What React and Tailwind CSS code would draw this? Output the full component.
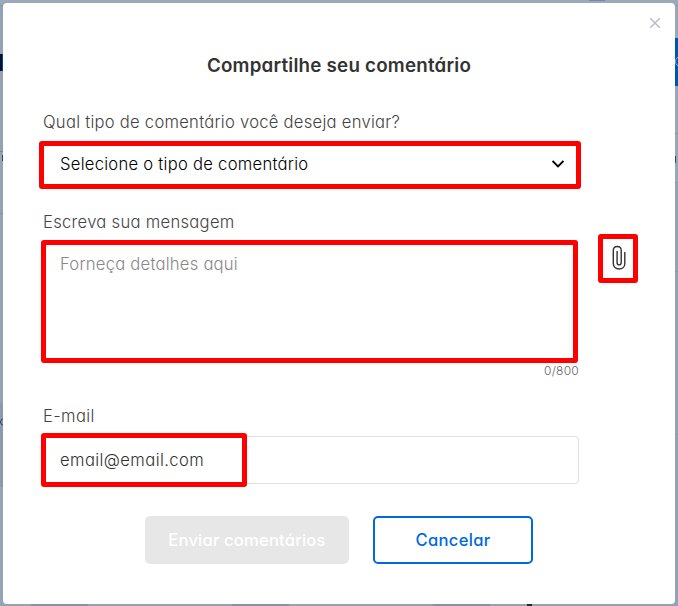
import { useState } from "react";

// slices of the dimmed page that stay visible around the dialog
const leftSlices = [
  "h-[2px] bg-[#9aabbc]",
  "h-[1px] bg-[#8797a9]",
  "h-[48px] bg-[#93a3b5]",
  "h-[17px] bg-[#00112a] border-r border-[#00468c]",
  "h-[80px] bg-[#93a3b5]",
  "h-[1px] bg-[#5e8fc0]",
  "h-[3px] bg-[#93a3b5]",
  "ml-[2px] h-[6px] bg-[#3b3f5c]",
  "h-[52px] bg-[#93a3b5]",
  "h-[1px] bg-[#8797a9]",
  "h-[189px] bg-[#93a3b5]",
  "h-[15px] bg-[#8b9bab]",
  "h-[8px] w-[8px] rounded-full border border-[#1d3c70] bg-[#8b9bab]",
  "h-[61px] bg-[#8b9bab]",
  "h-[120px] bg-[#95a5b7]",
];

const rightSlices = [
  "h-[2px] bg-[#98a8b9]",
  "h-[1px] bg-[#8797a9]",
  "h-[32px] bg-[#98a8b9]",
  "h-[18px] bg-[#0053b0]",
  "h-[11px] bg-[#0053b0]",
  "h-[19px] bg-[#0053b0]",
  "h-[47px] bg-[#98a8b9]",
  "h-[1px] bg-[#8797a9]",
  "h-[22px] bg-[#98a8b5]",
  "h-[7px] w-[1px] bg-[#0d4f9e]",
  "h-[19px] bg-[#98a8b5]",
  "h-[1px] bg-[#8797a9]",
  "h-[88px] bg-[#93a3b5]",
  "h-[1px] bg-[#8797a9]",
  "h-[162px] bg-[#93a3b5]",
  "h-[1px] bg-[#8797a9]",
  "h-[169px] bg-[#93a3b5]",
];

function Slices({ items, glyph }) {
  return (
    <div className="flex flex-col overflow-hidden">
      {items.map((item, i) => (
        <div key={i} className={`shrink-0 ${item}`}>
          {i === glyph && <div className="h-[11px] w-[11px] rounded-full border border-[#93b0d2]" />}
        </div>
      ))}
    </div>
  );
}

function PaperclipIcon() {
  return (
    <svg width="14" height="26" viewBox="0 0 14 26" fill="none" stroke="#333" strokeWidth="1.4" strokeLinecap="round">
      <path d="M12.8 7.5V18.5C12.8 21.8 10.3 24 7.1 24S1.3 21.8 1.3 18.5V5.5C1.3 3 3 1.5 5.2 1.5S9.2 3 9.2 5.5V17.8C9.2 19.1 8.3 19.9 7.2 19.9S5.1 19.1 5.1 17.8V6.5" />
    </svg>
  );
}

function App() {
  const [message, setMessage] = useState("");

  return (
    <div className="grid h-[606px] w-[678px] grid-cols-[3px_672px_3px] grid-rows-[3px_601px_2px] overflow-hidden bg-[#98a8b9] font-['Inter',sans-serif] [font-feature-settings:'cv11']">

      <div className="col-span-3 flex bg-[#9aaaba]">
        <div className="ml-[589px] h-[1px] w-4 bg-[#78879b]" />
      </div>

      <Slices items={leftSlices} />

      <div className="flex flex-col rounded-[4px] bg-white">

        <div className="flex h-[42px] justify-end pt-[14px] pr-[14px]">
          <button className="h-3 w-3">
            <svg width="12" height="12" viewBox="0 0 12 12" stroke="#b9bdc9" strokeWidth="1.6">
              <path d="M1.3 1.3L10.7 10.7M10.7 1.3L1.3 10.7" />
            </svg>
          </button>
        </div>

        <h1 className="h-10 text-center text-[18.75px] leading-[42px] font-semibold tracking-[0.22px] text-[#333]">
          Compartilhe seu comentário
        </h1>

        <div className="mt-6 flex flex-col">
          <label className="ml-10 h-6 text-[16.6px] leading-[26px] font-light text-[#444]">
            <span className="tracking-[0.26px]">Qual tipo de comentário você deseja enviar?</span>
          </label>

          <button className="mt-[8px] ml-[36px] flex h-12 w-[542px] items-center justify-between rounded-[3px] border-[5px] border-[#f00] pr-[12px] pb-[3px] pl-4 text-[16.6px] font-light text-black">
            <span className="pt-[1px] tracking-[0.27px]">Selecione o tipo de comentário</span>
            <svg width="12" height="8" viewBox="0 0 12 8" fill="none" stroke="#000" strokeWidth="1.8">
              <path d="M0.6 1L6 6.4L11.4 1" />
            </svg>
          </button>
        </div>

        <label className="mt-5 ml-10 h-6 text-[16.6px] leading-[26px] font-light text-[#444]">
          <span className="tracking-[0.29px]">Escreva sua mensagem</span>
        </label>

        <div className="mt-[1px] ml-[38px] flex items-start">
          <textarea
            value={message}
            onChange={(e) => setMessage(e.target.value)}
            maxLength={800}
            placeholder="Forneça detalhes aqui"
            className="mt-[6px] h-[123px] w-[537px] resize-none rounded-[3px] border-[5px] border-[#f00] px-[14px] py-[7px] text-[16.6px] leading-6 font-light tracking-[0.24px] outline-none placeholder:text-[#888]"
          />
          <button className="ml-5 flex h-[49px] w-10 items-center justify-center rounded-[3px] border-[5px] border-[#f00] pb-[1px] pl-[1px]">
            <PaperclipIcon />
          </button>
        </div>

        <p className="h-4 w-[576px] text-right text-[12px] leading-4 font-light tracking-[0.25px] text-[#666]">{message.length}/800</p>

        <label className="mt-[24px] ml-10 h-6 text-[16.6px] leading-[26px] font-light text-[#444]">
          <span className="tracking-[0.35px]">E-mail</span>
        </label>

        <div className="mt-[6px] ml-[38px] flex h-[54px] items-center">
          <div className="flex h-[54px] w-[206px] items-center rounded-[3px] border-[5px] border-[#f00] pl-[14px] text-[16.6px] font-light text-[#333]">
            <span className="tracking-[0.4px]">email@email.com</span>
          </div>
          <div className="h-12 w-[332px] rounded-r-[4px] border border-l-0 border-[#e1e1e4]" />
        </div>

        <div className="mt-[29px] ml-[142px] flex gap-6 text-[16.6px] font-medium">
          <button className="h-12 w-[204px] rounded-[5px] bg-[#e7e7e7] text-white">
            <span className="tracking-[0.18px]">Enviar comentários</span>
          </button>
          <button className="h-12 w-[160px] rounded-[5px] border-2 border-[#0069de] text-[#0069de]">
            <span className="tracking-[0.28px]">Cancelar</span>
          </button>
        </div>

      </div>

      <Slices items={rightSlices} glyph={4} />

      <div className="col-span-3 flex bg-[#93a3b3]">
        <div className="ml-[31px] w-[57px] bg-[#8293a4]" />
        <div className="ml-[144px] w-[57px] bg-[#8293a4]" />
        <div className="ml-[144px] w-[57px] bg-[#8293a4]" />
        <div className="ml-[37px] w-[5px] bg-[#1c2b3a]" />
      </div>

    </div>
  );
}

export default App;
